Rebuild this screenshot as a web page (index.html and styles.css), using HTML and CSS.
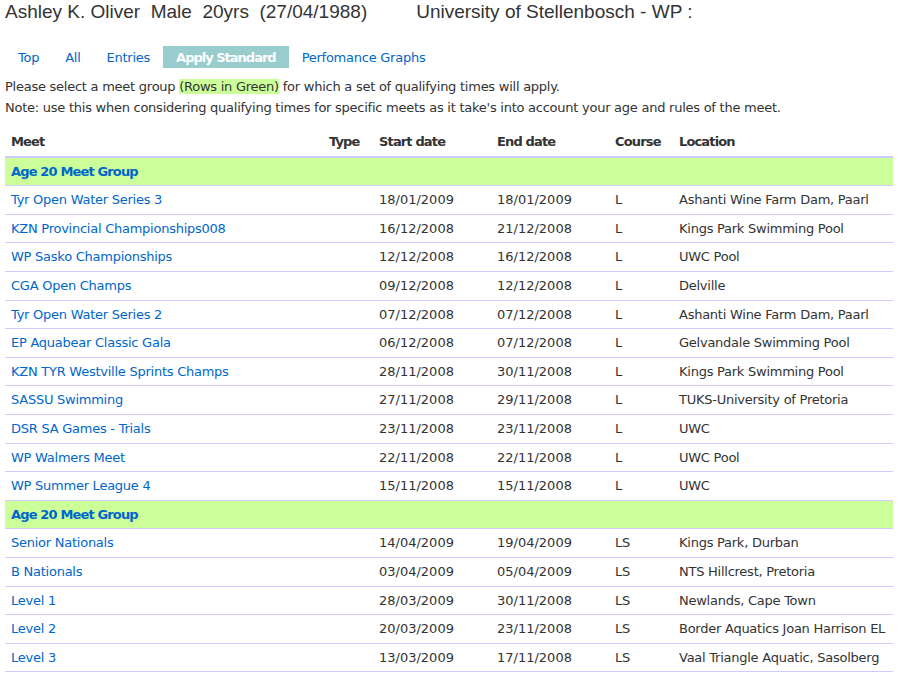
FILE: index.html
```html
<!DOCTYPE html>
<html>
<head>
<meta charset="utf-8">
<title>Apply Standard</title>
<link rel="stylesheet" href="styles.css">
</head>
<body>
<h1 class="swimmer"><span class="name">Ashley K. Oliver&nbsp; Male&nbsp; 20yrs&nbsp; (27/04/1988)</span><span class="club">University of Stellenbosch - WP :</span></h1>
<nav class="tabs">
  <a class="tab" href="#">Top</a>
  <a class="tab" href="#">All</a>
  <a class="tab" href="#">Entries</a>
  <a class="tab active" href="#">Apply Standard</a>
  <a class="tab" href="#">Perfomance Graphs</a>
</nav>
<p class="note">Please select a meet group <span class="hl">(Rows in Green)</span> for which a set of qualifying times will apply.</p>
<p class="note">Note: use this when considering qualifying times for specific meets as it take's into account your age and rules of the meet.</p>
<table class="meets">
  <colgroup>
    <col class="c-meet"><col class="c-type"><col class="c-date"><col class="c-date"><col class="c-course"><col class="c-loc">
  </colgroup>
  <thead>
    <tr><th>Meet</th><th>Type</th><th>Start date</th><th>End date</th><th>Course</th><th>Location</th></tr>
  </thead>
  <tbody>
    <tr class="group"><td colspan="6"><a href="#">Age 20 Meet Group</a></td></tr>
    <tr><td><a href="#">Tyr Open Water Series 3</a></td><td></td><td class="d">18/01/2009</td><td class="d">18/01/2009</td><td>L</td><td>Ashanti Wine Farm Dam, Paarl</td></tr>
    <tr><td><a href="#">KZN Provincial Championships008</a></td><td></td><td class="d">16/12/2008</td><td class="d">21/12/2008</td><td>L</td><td>Kings Park Swimming Pool</td></tr>
    <tr><td><a href="#">WP Sasko Championships</a></td><td></td><td class="d">12/12/2008</td><td class="d">16/12/2008</td><td>L</td><td>UWC Pool</td></tr>
    <tr><td><a href="#">CGA Open Champs</a></td><td></td><td class="d">09/12/2008</td><td class="d">12/12/2008</td><td>L</td><td>Delville</td></tr>
    <tr><td><a href="#">Tyr Open Water Series 2</a></td><td></td><td class="d">07/12/2008</td><td class="d">07/12/2008</td><td>L</td><td>Ashanti Wine Farm Dam, Paarl</td></tr>
    <tr><td><a href="#">EP Aquabear Classic Gala</a></td><td></td><td class="d">06/12/2008</td><td class="d">07/12/2008</td><td>L</td><td>Gelvandale Swimming Pool</td></tr>
    <tr><td><a href="#">KZN TYR Westville Sprints Champs</a></td><td></td><td class="d">28/11/2008</td><td class="d">30/11/2008</td><td>L</td><td>Kings Park Swimming Pool</td></tr>
    <tr><td><a href="#">SASSU Swimming</a></td><td></td><td class="d">27/11/2008</td><td class="d">29/11/2008</td><td>L</td><td>TUKS-University of Pretoria</td></tr>
    <tr><td><a href="#">DSR SA Games - Trials</a></td><td></td><td class="d">23/11/2008</td><td class="d">23/11/2008</td><td>L</td><td>UWC</td></tr>
    <tr><td><a href="#">WP Walmers Meet</a></td><td></td><td class="d">22/11/2008</td><td class="d">22/11/2008</td><td>L</td><td>UWC Pool</td></tr>
    <tr><td><a href="#">WP Summer League 4</a></td><td></td><td class="d">15/11/2008</td><td class="d">15/11/2008</td><td>L</td><td>UWC</td></tr>
    <tr class="group"><td colspan="6"><a href="#">Age 20 Meet Group</a></td></tr>
    <tr><td><a href="#">Senior Nationals</a></td><td></td><td class="d">14/04/2009</td><td class="d">19/04/2009</td><td>LS</td><td>Kings Park, Durban</td></tr>
    <tr><td><a href="#">B Nationals</a></td><td></td><td class="d">03/04/2009</td><td class="d">05/04/2009</td><td>LS</td><td>NTS Hillcrest, Pretoria</td></tr>
    <tr><td><a href="#">Level 1</a></td><td></td><td class="d">28/03/2009</td><td class="d">30/11/2008</td><td>LS</td><td>Newlands, Cape Town</td></tr>
    <tr><td><a href="#">Level 2</a></td><td></td><td class="d">20/03/2009</td><td class="d">23/11/2008</td><td>LS</td><td>Border Aquatics Joan Harrison EL</td></tr>
    <tr><td><a href="#">Level 3</a></td><td></td><td class="d">13/03/2009</td><td class="d">17/11/2008</td><td>LS</td><td>Vaal Triangle Aquatic, Sasolberg</td></tr>
  </tbody>
</table>
</body>
</html>
```

FILE: styles.css
```css
html, body {
  margin: 0;
  background: #ffffff;
}
body {
  padding: 0 5px;
  font-family: "DejaVu Sans", Verdana, sans-serif;
  font-size: 13px;
  letter-spacing: -0.25px;
  color: #333333;
}
a {
  color: #0066cc;
  text-decoration: none;
}
.swimmer {
  margin: 0;
  font-family: "Liberation Sans", Arial, sans-serif;
  font-size: 19px;
  font-weight: normal;
  letter-spacing: 0;
  line-height: 24px;
  color: #333333;
  display: flex;
  gap: 49px;
}
.tabs {
  display: flex;
  margin-top: 22px;
  height: 22px;
}
.tab {
  display: block;
  padding: 1px 13px 0;
  height: 22px;
  box-sizing: border-box;
  line-height: 21px;
  color: #0066cc;
}
.tab.active {
  background: #99cccc;
  color: #ffffff;
  font-weight: bold;
  letter-spacing: -1px;
}
.note {
  margin: 0;
  line-height: 21px;
}
.tabs + .note {
  margin-top: 8px;
}
.hl {
  background: #ccff99;
}
.meets {
  margin-top: 10px;
  width: 888px;
  border-collapse: collapse;
  table-layout: fixed;
}
.c-meet { width: 318px; }
.c-type { width: 50px; }
.c-date { width: 118px; }
.c-course { width: 64px; }
.c-loc { width: 220px; }
.meets th {
  text-align: left;
  font-weight: bold;
  letter-spacing: -0.85px;
  padding: 6px 6px;
  line-height: 15.6px;
  border-bottom: 2px solid #ccccff;
  white-space: nowrap;
}
.meets td {
  padding: 6px 6px;
  line-height: 15.6px;
  border-bottom: 1px solid #ccccff;
  white-space: nowrap;
  overflow: hidden;
}
.meets td.d {
  letter-spacing: 0;
}
.meets tr.group td {
  background: #ccff99;
  font-weight: bold;
  letter-spacing: -0.85px;
}
```
